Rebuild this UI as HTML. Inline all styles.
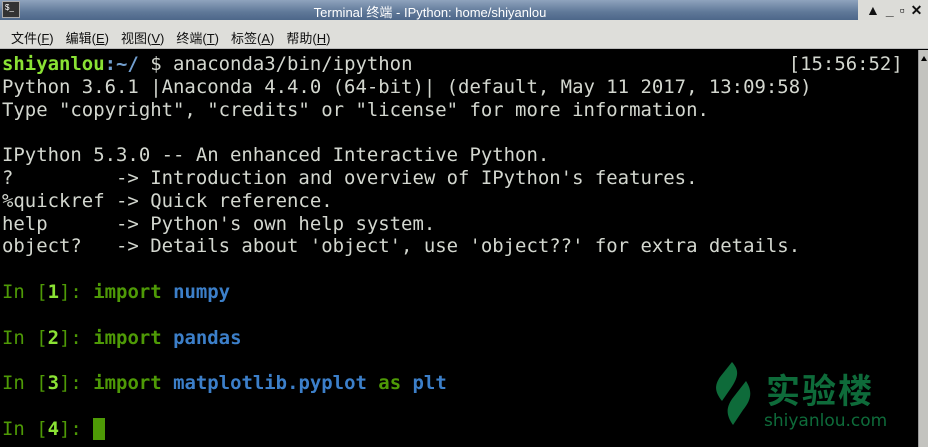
<!DOCTYPE html>
<html><head><meta charset="utf-8"><style>
*{margin:0;padding:0;box-sizing:border-box}
body{width:928px;height:447px;overflow:hidden;background:#000;position:relative;font-family:"Liberation Sans","Noto Sans CJK SC",sans-serif}
#title{position:absolute;left:0;top:0;width:928px;height:20px;background:linear-gradient(#8fa3bd,#5f7898 60%,#4d6789);}
#title .t{position:absolute;left:0;width:860px;text-align:center;top:2px;color:#fff;font-size:13px}
#title .btns{position:absolute;right:0;top:0;width:70px;height:20px;background:#dcdcd8;color:#111;font-size:14px;font-weight:bold;letter-spacing:6px;padding-left:8px;line-height:20px}
#icon{position:absolute;left:2px;top:1px;width:18px;height:17px;background:#333;border:1px solid #aaa;color:#fff;font-size:8px;line-height:8px;padding:2px}
#menu{position:absolute;left:0;top:20px;width:928px;height:29px;background:#dededa;border-bottom:1px solid #bbb;font-size:13px;color:#111;padding:8px 0 0 11px;word-spacing:0}
#menu span{margin-right:12px}
#term{position:absolute;left:2px;top:50px;width:916px;height:397px;background:#000}
pre{position:absolute;left:2px;top:53px;font-family:"DejaVu Sans Mono",monospace;font-size:18.95px;line-height:22.8px;color:#d3d7cf}
.g{color:#8ae234;font-weight:bold}.b{color:#729fcf;font-weight:bold}
.dg{color:#4e9a06}.dgb{color:#4e9a06;font-weight:bold}.bl{color:#3c7fc9;font-weight:bold}
.cur{background:#4e9a06}
#sb{position:absolute;left:918px;top:50px;width:10px;height:397px;background:#c3c3bf;border-left:1px solid #999}
#sb:before{content:"";position:absolute;left:2px;top:6px;border-left:3px solid transparent;border-right:3px solid transparent;border-bottom:5px solid #000}
#logo{position:absolute;left:712px;top:362px}
.lt{position:absolute;left:766px;top:370px;color:#0e6b3a;font-size:34px;font-weight:bold;letter-spacing:2px;font-family:"Noto Sans CJK SC",sans-serif;line-height:38px}
.ls{position:absolute;left:764px;top:411px;color:#0e6b3a;font-size:17px;font-family:"DejaVu Sans",sans-serif}
</style></head><body>
<div id="title"><div id="icon">$_</div><div class="t">Terminal 终端 - IPython: home/shiyanlou</div><div class="btns">▲_▫✕</div></div>
<div id="menu"><span>文件(<u>F</u>)</span><span>编辑(<u>E</u>)</span><span>视图(<u>V</u>)</span><span>终端(<u>T</u>)</span><span>标签(<u>A</u>)</span><span>帮助(<u>H</u>)</span></div>
<div id="term"></div>
<pre><span class="g">shiyanlou</span><span class="b">:~/</span> $ anaconda3/bin/ipython                                 [15:56:52]
Python 3.6.1 |Anaconda 4.4.0 (64-bit)| (default, May 11 2017, 13:09:58)
Type "copyright", "credits" or "license" for more information.

IPython 5.3.0 -- An enhanced Interactive Python.
?         -> Introduction and overview of IPython's features.
%quickref -> Quick reference.
help      -> Python's own help system.
object?   -> Details about 'object', use 'object??' for extra details.

<span class="dg">In [</span><span class="g">1</span><span class="dg">]: </span><span class="dgb">import</span> <span class="bl">numpy</span>

<span class="dg">In [</span><span class="g">2</span><span class="dg">]: </span><span class="dgb">import</span> <span class="bl">pandas</span>

<span class="dg">In [</span><span class="g">3</span><span class="dg">]: </span><span class="dgb">import</span> <span class="bl">matplotlib.pyplot</span> <span class="dgb">as</span> <span class="bl">plt</span>

<span class="dg">In [</span><span class="g">4</span><span class="dg">]: </span><span class="cur"> </span></pre>
<div id="sb"></div>
<svg id="logo" width="40" height="64" viewBox="0 0 40 64"><path d="M20 0 C27 8 27 14 19 26 L10 39 C3 30 2 24 8 15 Z" fill="#0e6b3a"/><path d="M34 19 C41 30 39 38 31 48 L21 63 C14 53 14 46 20 37 Z" fill="#0e6b3a"/></svg>
<div class="lt">实验楼</div>
<div class="ls">shiyanlou.com</div>
</body></html>
